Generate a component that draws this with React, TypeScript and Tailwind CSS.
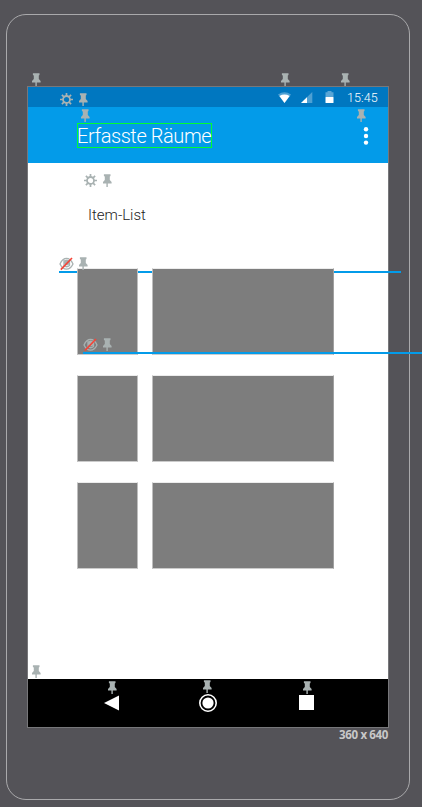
import React from "react";

type Point = { x: number; y: number };

const PINS: Point[] = [
  { x: 32, y: 73 },
  { x: 281, y: 73 },
  { x: 341, y: 73 },
  { x: 79, y: 93 },
  { x: 81, y: 109 },
  { x: 357, y: 109 },
  { x: 103, y: 174 },
  { x: 79, y: 257 },
  { x: 103, y: 338 },
  { x: 32, y: 665 },
  { x: 108, y: 681 },
  { x: 203, y: 680 },
  { x: 303, y: 681 },
];

const GEARS: Point[] = [
  { x: 60, y: 93 },
  { x: 84, y: 174 },
];

const HIDDEN: Point[] = [
  { x: 59, y: 257 },
  { x: 83, y: 338 },
];

function Pin({ x, y }: Point) {
  return (
    <svg className="absolute" style={{ left: x, top: y }} width="9" height="13" viewBox="0 0 9 13" fill="#a9b2b2">
      <path d="M.9 .2H7.5V2L6.8 2.5V6L8.6 8V9.6H4.8V13H3.4V9.6H0V8L1.8 6V2.5L.9 2Z" />
    </svg>
  );
}

function Gear({ x, y }: Point) {
  return (
    <svg className="absolute" style={{ left: x, top: y }} width="13" height="13" viewBox="0 0 13 13" fill="none" stroke="#a9b2b2">
      <circle cx="6.5" cy="6.5" r="3.5" strokeWidth="1.8" />
      <path
        d="M6.5 0V2.8M6.5 10.2V13M0 6.5H2.8M10.2 6.5H13M1.9 1.9L3.9 3.9M9.1 9.1L11.1 11.1M11.1 1.9L9.1 3.9M3.9 9.1L1.9 11.1"
        strokeWidth="1.7"
      />
    </svg>
  );
}

function HiddenEye({ x, y }: Point) {
  return (
    <svg className="absolute" style={{ left: x, top: y }} width="15" height="14" viewBox="0 0 15 14" fill="none">
      <path d="M1 7Q3.5 1.4 7.5 1.4T14 7Q11.5 12.2 7.5 12.2T1 7Z" stroke="#a9b2b2" strokeWidth="1.3" />
      <path d="M5 2.5V8.5Q7.5 11 10.5 8.5V2.5" stroke="#a9b2b2" strokeWidth="1.3" />
      <circle cx="7.8" cy="5.4" r="2.8" fill="#a9b2b2" />
      <path d="M1.8 12.6L13 1" stroke="#f44336" strokeWidth="1.6" />
    </svg>
  );
}

function StatusBar() {
  return (
    <div className="flex h-5 shrink-0 items-center justify-end bg-[#0077c0] pr-2.5 pt-px text-white">
      <svg width="13" height="12" viewBox="0 0 13 12" className="mr-[10px]">
        <path d="M0 2.6Q6.5-2 13 2.6L6.5 11Z" fill="#fff" opacity=".3" />
        <path d="M1.4 4Q6.5 1.2 11.6 4L6.5 11Z" fill="#fff" />
      </svg>
      <svg width="12" height="12" viewBox="0 0 12 12" className="mr-3">
        <path d="M0 11L11.3 0V11Z" fill="#fff" opacity=".3" />
        <path d="M0 11L6 5.2V11Z" fill="#fff" />
      </svg>
      <svg width="9" height="13" viewBox="0 0 9 13" className="mr-[13px]">
        <path d="M.5 1.2H2.5V0H6.5V1.2H8.5V6H.5Z" fill="#fff" opacity=".35" />
        <rect x=".5" y="6" width="8" height="6" rx=".5" fill="#fff" />
      </svg>
      <span className="w-[31px] whitespace-nowrap text-[12.5px] font-light leading-5 tracking-[0.1px]">15:45</span>
    </div>
  );
}

function AppBar() {
  return (
    <div className="flex h-14 shrink-0 items-center justify-between bg-[#039be9] pl-[49px] pr-[19px]">
      <div className="h-[25px] w-[135px] whitespace-nowrap border border-[#00ff30] text-[20px] font-light leading-[24px] tracking-[-0.42px] text-white">
        <span className="-ml-px">Erfasste Räume</span>
      </div>
      <svg width="6" height="18" viewBox="0 0 6 18" fill="#fff" className="mt-0.5">
        <circle cx="3" cy="2.2" r="2.2" />
        <circle cx="3" cy="9" r="2.2" />
        <circle cx="3" cy="15.6" r="2.2" />
      </svg>
    </div>
  );
}

function ItemList() {
  return (
    <div className="relative flex-1 bg-white">
      <div className="absolute left-[31px] top-[108px] h-0.5 w-[342px] bg-[#039be9]" />
      <div className="relative pl-[60px] pt-[42px] text-[15px] font-light leading-5 text-[#222]">Item-List</div>
      <div className="relative flex flex-col gap-5 pl-[49px] pt-[43px]">
        {[0, 1, 2].map((row) => (
          <div key={row} className="flex h-[87px] gap-[14px]">
            <div className="w-[61px] border border-b-[#cbcbcb] border-l-[#bebebe] border-r-[#bebebe] border-t-[#ececec] bg-[#7d7d7d]" />
            <div className="w-[182px] border border-b-[#cbcbcb] border-l-[#bebebe] border-r-[#a0a0a0] border-t-[#ececec] bg-[#7d7d7d]" />
          </div>
        ))}
      </div>
      <div className="absolute left-[55px] top-[189px] h-0.5 w-[339px] bg-[#039be9]" />
    </div>
  );
}

function NavBar() {
  return (
    <div className="flex h-12 shrink-0 items-center bg-black pb-px pl-[76px]">
      <svg width="15" height="16" viewBox="0 0 15 16" fill="#fff">
        <path d="M0 8L15 .5V15.5Z" />
      </svg>
      <svg width="18" height="18" viewBox="0 0 18 18" className="ml-20">
        <circle cx="9" cy="9" r="8.2" fill="none" stroke="#fff" strokeWidth="1.6" />
        <circle cx="9" cy="9" r="5.6" fill="#fff" />
      </svg>
      <div className="ml-[82px] size-[15px] bg-white" />
    </div>
  );
}

export default function App() {
  return (
    <div className="relative h-[807px] w-[422px] overflow-hidden bg-[#545358] pl-1.5 pt-3.5 font-['Roboto',sans-serif]">
      <div className="h-[786px] w-[404px] rounded-[20px] border border-[#a9a9ab] pl-5 pt-[71px]">
        <div className="flex h-[642px] w-[362px] flex-col border border-[#77777a]">
          <StatusBar />
          <AppBar />
          <ItemList />
          <NavBar />
        </div>
        <div className="-mt-px w-[361px] text-right font-['Open_Sans',sans-serif] text-[11.5px] font-bold leading-[15px] tracking-[-0.35px] text-[#c8c8c8]">
          360 x 640
        </div>
      </div>
      {PINS.map((p) => (
        <Pin key={`${p.x}-${p.y}`} {...p} />
      ))}
      {GEARS.map((p) => (
        <Gear key={`${p.x}-${p.y}`} {...p} />
      ))}
      {HIDDEN.map((p) => (
        <HiddenEye key={`${p.x}-${p.y}`} {...p} />
      ))}
    </div>
  );
}
